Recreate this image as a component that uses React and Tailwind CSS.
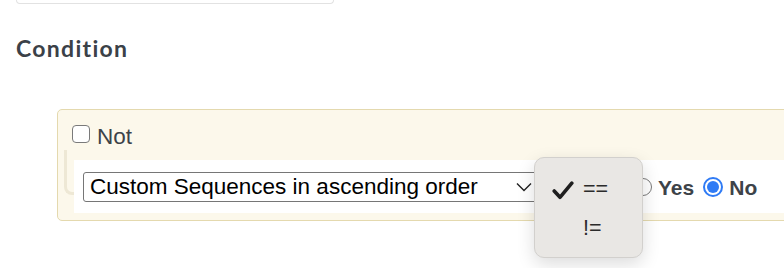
import React from 'react'

const sans = { fontFamily: '"Liberation Sans", Arial, sans-serif' }

const Radio = ({ checked }) =>
  checked ? (
    <span className="flex items-center justify-center w-[20px] h-[20px] rounded-full border-[2px] border-[#2f7bf5] bg-white">
      <span className="w-[12px] h-[12px] rounded-full bg-[#2f7bf5]" />
    </span>
  ) : (
    <span className="w-[18px] h-[18px] rounded-full border border-[#7a7a7a] bg-white" />
  )

const OperatorMenu = () => (
  <div
    className="absolute left-[534px] top-[157px] w-[109px] h-[101px] rounded-[10px] border border-[#d2d0cd] bg-[#e9e7e4] shadow-[0_6px_18px_rgba(0,0,0,0.14)] pt-[13px] text-[21.5px] text-[#2b2b2b]"
    style={sans}
  >
    <div className="flex items-center h-[38px]">
      <svg className="ml-[17px] w-[22px] h-[19px]" viewBox="0 0 22 19" fill="none">
        <path d="M2.2 10 L8 16.3 L19.8 2.2" stroke="#1f1f1f" strokeWidth="3.6" strokeLinecap="round" strokeLinejoin="round" />
      </svg>
      <span className="ml-[9px] leading-none">==</span>
    </div>
    <div className="flex items-center h-[40px]">
      <span className="ml-[48px] leading-none">!=</span>
    </div>
  </div>
)

export default function App() {
  return (
    <div className="relative w-[784px] h-[268px] overflow-hidden bg-white">
      {/* bottom of the field above */}
      <div className="ml-[16px] w-[318px] h-[4px] border border-t-0 border-[#e2e2e2] rounded-b-[6px]" />

      <h2
        className="ml-[16px] mt-[31px] text-[23px] leading-[26px] font-bold tracking-[1.3px] text-[#3b4148]"
        style={{ fontFamily: 'Lato, "Open Sans", sans-serif' }}
      >
        Condition
      </h2>

      {/* condition group */}
      <div className="ml-[57px] mt-[48px] w-[760px] h-[112px] rounded-[5px] border border-[#e4d9ae] bg-[#fcf8eb] pt-[15px]">
        <label className="flex items-center h-[18px] pl-[14px] gap-[7px] text-[22.5px] text-[#3d4349]" style={sans}>
          <span className="w-[18px] h-[18px] rounded-[4px] border border-[#7a7a7a] bg-white" />
          <span className="leading-none translate-y-[3px]">Not</span>
        </label>

        <div className="flex mt-[7px]">
          <div className="ml-[6px] w-[10px] h-[45px] border-l-[3px] border-b-[3px] border-[#eee8d5] rounded-bl-[8px]" />
          <div className="flex-1 mt-[10px] h-[53px] bg-white pl-[9px] pt-[12px] flex items-start">
            <div
              className="flex items-center w-[458px] h-[30px] border border-[#767676] rounded-[3px] pl-[6px] text-[22.5px] text-black"
              style={sans}
            >
              <span className="leading-none">Custom Sequences in ascending order</span>
              <svg className="ml-auto mr-[8px] w-[16px] h-[10px]" viewBox="0 0 16 10" fill="none">
                <path d="M1 1.5 L8 8.5 L15 1.5" stroke="#222" strokeWidth="1.4" />
              </svg>
            </div>

            <div className="flex items-center h-[30px] ml-[93px] text-[21px] font-bold text-[#3d4349]" style={sans}>
              <Radio />
              <span className="ml-[6px] leading-none">Yes</span>
              <span className="ml-[9px]">
                <Radio checked />
              </span>
              <span className="ml-[6px] leading-none">No</span>
            </div>
          </div>
        </div>
      </div>

      <OperatorMenu />
    </div>
  )
}
